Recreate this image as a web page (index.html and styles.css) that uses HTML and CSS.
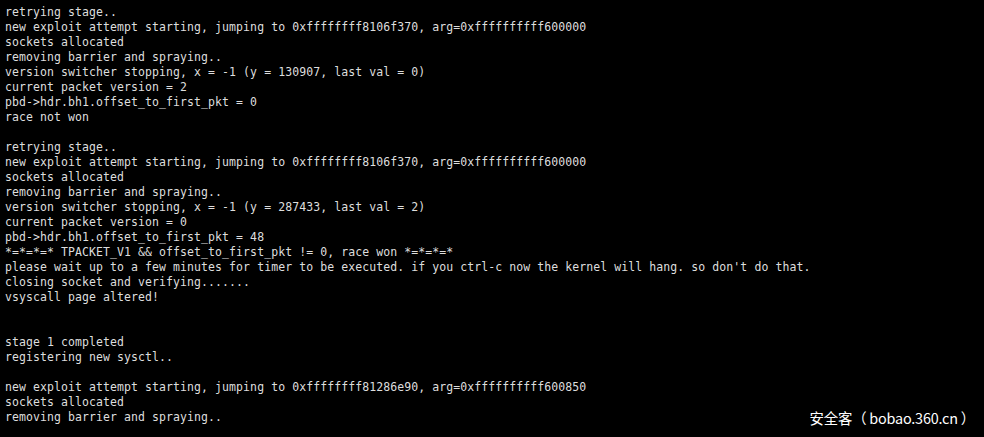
FILE: index.html
```html
<!DOCTYPE html>
<html>
<head>
<meta charset="utf-8">
<link rel="stylesheet" href="styles.css">
</head>
<body>
<div class="term">
<pre class="out">retrying stage..
new exploit attempt starting, jumping to 0xffffffff8106f370, arg=0xffffffffff600000
sockets allocated
removing barrier and spraying..
version switcher stopping, x = -1 (y = 130907, last val = 0)
current packet version = 2
pbd-&gt;hdr.bh1.offset_to_first_pkt = 0
race not won

retrying stage..
new exploit attempt starting, jumping to 0xffffffff8106f370, arg=0xffffffffff600000
sockets allocated
removing barrier and spraying..
version switcher stopping, x = -1 (y = 287433, last val = 2)
current packet version = 0
pbd-&gt;hdr.bh1.offset_to_first_pkt = 48
*=*=*=* TPACKET_V1 &amp;&amp; offset_to_first_pkt != 0, race won *=*=*=*
please wait up to a few minutes for timer to be executed. if you ctrl-c now the kernel will hang. so don't do that.
closing socket and verifying.......
vsyscall page altered!


stage 1 completed
registering new sysctl..

new exploit attempt starting, jumping to 0xffffffff81286e90, arg=0xffffffffff600850
sockets allocated
removing barrier and spraying..</pre>
<div class="mark">安全客（ bobao.360.cn ）</div>
</div>
</body>
</html>
```
FILE: styles.css
```css
html, body {
  margin: 0;
  padding: 0;
  background: #000;
}
.term {
  position: relative;
  width: 984px;
  height: 437px;
  overflow: hidden;
  background: #000;
}
.out {
  margin: 0;
  padding: 5px 0 0 5px;
  font-family: "DejaVu Sans Mono", monospace;
  font-size: 11.5px;
  letter-spacing: 0.08px;
  line-height: 15px;
  color: #dedede;
  white-space: pre;
}
.mark {
  position: absolute;
  right: 9px;
  bottom: 10px;
  font-family: "Noto Sans CJK SC", "Noto Sans", sans-serif;
  font-size: 14.4px;
  line-height: 18px;
  color: #ffffff;
  letter-spacing: -0.2px;
}
```
